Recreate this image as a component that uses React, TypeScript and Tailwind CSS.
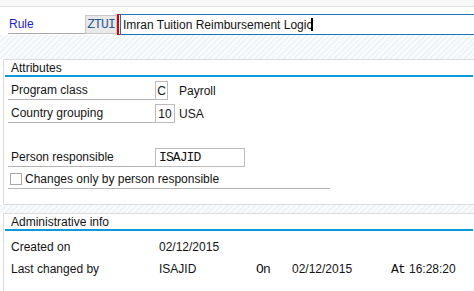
import React from "react"

const hatch =
  "bg-[repeating-linear-gradient(135deg,#f1f4f7_0px,#f1f4f7_2px,#fafbfc_2px,#fafbfc_4px)]"
const mono = "font-['Liberation_Mono',monospace] text-[13px] tracking-[-0.9px]"

const FieldRow = ({
  label,
  children,
  className = "",
}: {
  label: string
  children?: React.ReactNode
  className?: string
}) => (
  <div className={`flex h-[19px] items-stretch ${className}`}>
    <div className="flex w-[147px] items-center border-b border-[#b4b4b4] pl-[3px]">
      {label}
    </div>
    {children}
  </div>
)

export default function App() {
  return (
    <div className="flex h-[291px] w-[474px] flex-col overflow-hidden bg-white font-['Liberation_Sans',Arial,sans-serif] text-[12px] leading-none text-[#141414]">
      {/* top strip */}
      <div className="h-[7px] shrink-0 border-b border-[#e2e2e2] bg-[#f7f7f7]" />

      {/* rule header */}
      <div className="flex h-[28px] shrink-0 items-start pt-[7px]">
        <div className="ml-[8px] flex h-[20px] w-[77px] items-center border-b border-[#a9a9a9] pl-[1px] text-[#2323cf]">
          Rule
        </div>
        <div className={`mt-[1px] flex h-[19px] w-[32px] items-center justify-center border border-[#c8c8c8] bg-[#e9e9e9] text-[#2b5d91] ${mono}`}>
          ZTUI
        </div>
        <div className="relative ml-[3px] flex h-[21px] flex-1 -mr-[2px] items-center border border-[#1a73b8] pl-[2px]">
          <span className="absolute -top-[1px] -bottom-[1px] -left-[4px] w-[3px] border-y border-l-2 border-[#e00000]" />
          <span>Imran Tuition Reimbursement Logic</span>
          <span className="ml-[-1px] inline-block h-[13px] w-[2px] bg-black" />
        </div>
      </div>

      <div className={`h-[24px] shrink-0 ${hatch}`} />

      {/* Attributes */}
      <div className="ml-[3px] h-[146px] shrink-0 border-y border-l border-[#dcdcdc] bg-white">
        <div className="mx-[1px] flex h-[17px] items-center border-b-2 border-[#0b9ad9] pl-[6px]">
          Attributes
        </div>
        <div className="ml-[4px] mt-[4px] flex flex-col">
          <FieldRow label="Program class">
            <div className="flex w-[24px] items-stretch">
              <div className="flex w-[13px] items-center justify-center border border-[#bcbcbc]">
                C
              </div>
            </div>
            <span className="self-center">Payroll</span>
          </FieldRow>
          <FieldRow label="Country grouping" className="mt-[4px]">
            <div className="flex w-[24px] items-stretch">
              <div className="flex w-[20px] items-center justify-center border border-[#bcbcbc]">
                10
              </div>
            </div>
            <span className="self-center">USA</span>
          </FieldRow>
          <FieldRow label="Person responsible" className="mt-[25px]">
            <div className={`flex w-[90px] items-center border border-[#bcbcbc] pl-[3px] text-[#111] ${mono}`}>
              ISAJID
            </div>
          </FieldRow>
          <div className="mt-[3px] flex h-[19px] w-[322px] items-center border-b border-[#b4b4b4] pl-[2px]">
            <span className="inline-block h-[12px] w-[12px] border border-[#a9a9a9] bg-white" />
            <span className="ml-[3px]">Changes only by person responsible</span>
          </div>
        </div>
      </div>

      <div className={`h-[8px] shrink-0 ${hatch}`} />

      {/* Administrative info */}
      <div className="ml-[3px] flex-1 border-t border-l border-[#dcdcdc] bg-white">
        <div className="mx-[1px] flex h-[17px] items-center border-b-2 border-[#0b9ad9] pl-[6px]">
          Administrative info
        </div>
        <div className="mt-[8px] flex h-[16px] items-center pl-[7px]">
          <span className="w-[148px]">Created on</span>
          <span>02/12/2015</span>
        </div>
        <div className="mt-[6px] flex h-[16px] items-center pl-[7px]">
          <span className="w-[148px]">Last changed by</span>
          <span className="w-[97px]">ISAJID</span>
          <span className={`w-[36px] text-[#111] ${mono}`}>On</span>
          <span className="w-[99px]">02/12/2015</span>
          <span className={`w-[18px] text-[#111] ${mono}`}>At</span>
          <span>16:28:20</span>
        </div>
      </div>
    </div>
  )
}
